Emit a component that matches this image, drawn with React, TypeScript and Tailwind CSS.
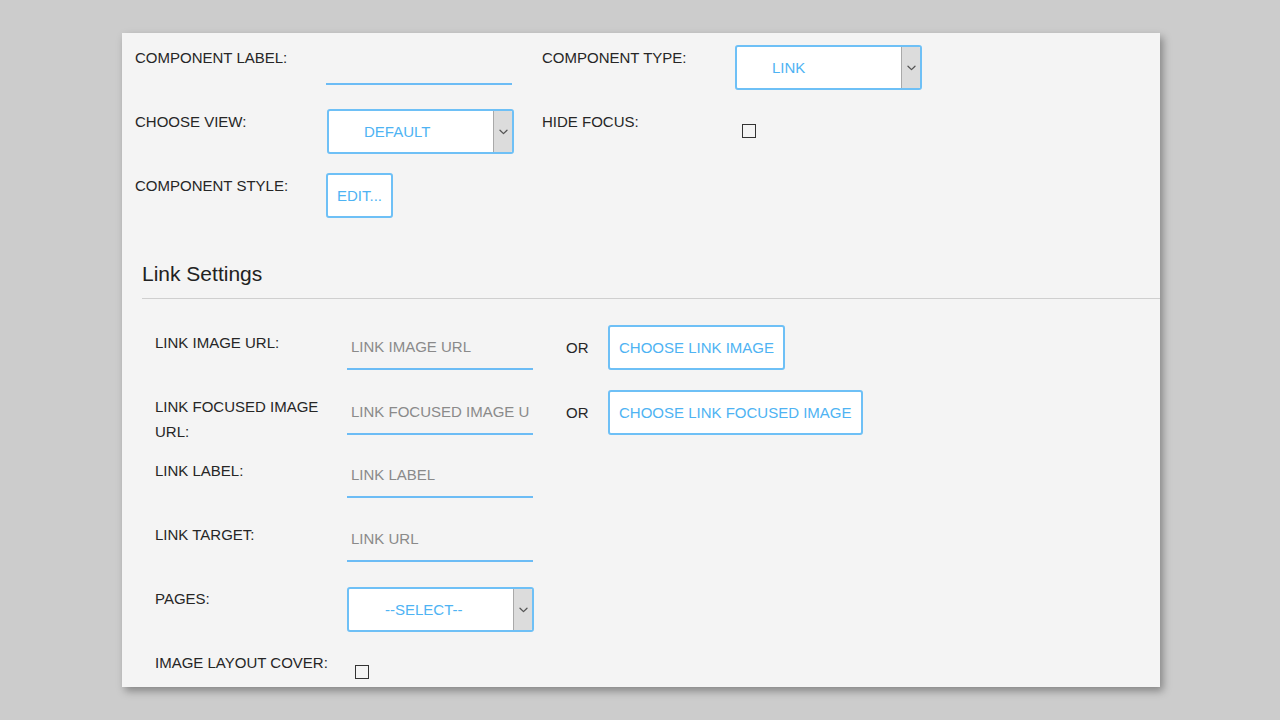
import React from "react";

const font = { fontFamily: '"Liberation Sans", Arial, Helvetica, sans-serif' };

function Chevron() {
  return (
    <svg width="9" height="6" viewBox="0 0 9 6" fill="none">
      <path d="M1 1.2 L4.5 4.6 L8 1.2" stroke="#555" strokeWidth="1.3" strokeLinecap="round" strokeLinejoin="round" />
    </svg>
  );
}

function Select({ value, pl = "pl-[35px]" }: { value: string; pl?: string }) {
  return (
    <div className="w-[187px] h-[45px] bg-white border-2 border-[#6ec0f6] rounded-[3px] flex overflow-hidden">
      <div className={`flex-1 flex items-center ${pl} text-[15px] text-[#4eb3f3]`}>{value}</div>
      <div className="w-[19px] bg-[#dcdcdc] border-l border-[#a9a9a9] flex items-center justify-center">
        <Chevron />
      </div>
    </div>
  );
}

function Button({ children }: { children: React.ReactNode }) {
  return (
    <div className="h-[45px] px-[9px] bg-white border-2 border-[#6ec0f6] rounded-[3px] flex items-center text-[15px] text-[#4eb3f3] whitespace-nowrap">
      {children}
    </div>
  );
}

function TextInput({ placeholder, h = "h-[45px]" }: { placeholder?: string; h?: string }) {
  return (
    <input
      readOnly
      placeholder={placeholder}
      className={`w-[186px] ${h} bg-transparent border-0 border-b-2 border-b-[#6cbcf5] outline-none pl-[4px] pr-[4px] text-[15px] placeholder:text-[#8a8a8a]`}
      style={font}
    />
  );
}

function Checkbox({ cls }: { cls: string }) {
  return <div className={`w-[14px] h-[14px] border-[1.5px] border-[#333] bg-transparent ${cls}`} />;
}

export default function App() {
  return (
    <div className="w-[1280px] h-[720px] bg-[#cccccc] overflow-hidden" style={font}>
      <div className="ml-[122px] mt-[33px] w-[1038px] h-[654px] bg-[#f4f4f4] shadow-[3px_4px_8px_rgba(0,0,0,0.35)] pt-[12px] text-[15px] text-[#262626] leading-[25px]">
        {/* Top section */}
        <div className="pl-[13px]">
          <div className="flex h-[64px]">
            <div className="w-[191px]">COMPONENT LABEL:</div>
            <TextInput h="h-[40px]" />
            <div className="w-[30px]" />
            <div className="w-[193px]">COMPONENT TYPE:</div>
            <Select value="LINK" />
          </div>
          <div className="flex h-[64px]">
            <div className="w-[191px]">CHOOSE VIEW:</div>
            <div className="ml-[1px]">
              <Select value="DEFAULT" />
            </div>
            <div className="w-[28px]" />
            <div className="w-[193px]">HIDE FOCUS:</div>
            <Checkbox cls="ml-[7px] mt-[15px]" />
          </div>
          <div className="flex h-[64px]">
            <div className="w-[191px]">COMPONENT STYLE:</div>
            <Button>EDIT...</Button>
          </div>
        </div>

        {/* Link Settings */}
        <div className="ml-[20px]">
          <div className="mt-[23px] text-[21px] leading-[28px] text-[#222]">Link Settings</div>
          <div className="mt-[10px] h-px bg-[#cfcfcf]" />
          <div className="pl-[13px] mt-[26px]">
            <div className="flex h-[64px]">
              <div className="w-[192px] pt-[5px]">LINK IMAGE URL:</div>
              <TextInput placeholder="LINK IMAGE URL" />
              <div className="ml-[33px] w-[42px] flex items-center h-[45px]">OR</div>
              <Button>CHOOSE LINK IMAGE</Button>
            </div>
            <div className="flex h-[64px]">
              <div className="w-[192px] pt-[5px] pr-[15px]">LINK FOCUSED IMAGE URL:</div>
              <div className="mt-[1px] flex">
                <TextInput placeholder="LINK FOCUSED IMAGE URL" />
                <div className="ml-[33px] w-[42px] flex items-center h-[45px]">OR</div>
                <Button>CHOOSE LINK FOCUSED IMAGE</Button>
              </div>
            </div>
            <div className="flex h-[64px]">
              <div className="w-[192px] pt-[5px]">LINK LABEL:</div>
              <TextInput placeholder="LINK LABEL" />
            </div>
            <div className="flex h-[64px]">
              <div className="w-[192px] pt-[5px]">LINK TARGET:</div>
              <TextInput placeholder="LINK URL" />
            </div>
            <div className="flex h-[64px]">
              <div className="w-[192px] pt-[5px]">PAGES:</div>
              <div className="mt-[6px]">
                <Select value="--SELECT--" pl="pl-[36px]" />
              </div>
            </div>
            <div className="flex h-[64px]">
              <div className="w-[200px] pt-[5px]">IMAGE LAYOUT COVER:</div>
              <Checkbox cls="mt-[20px]" />
            </div>
          </div>
        </div>
      </div>
    </div>
  );
}
